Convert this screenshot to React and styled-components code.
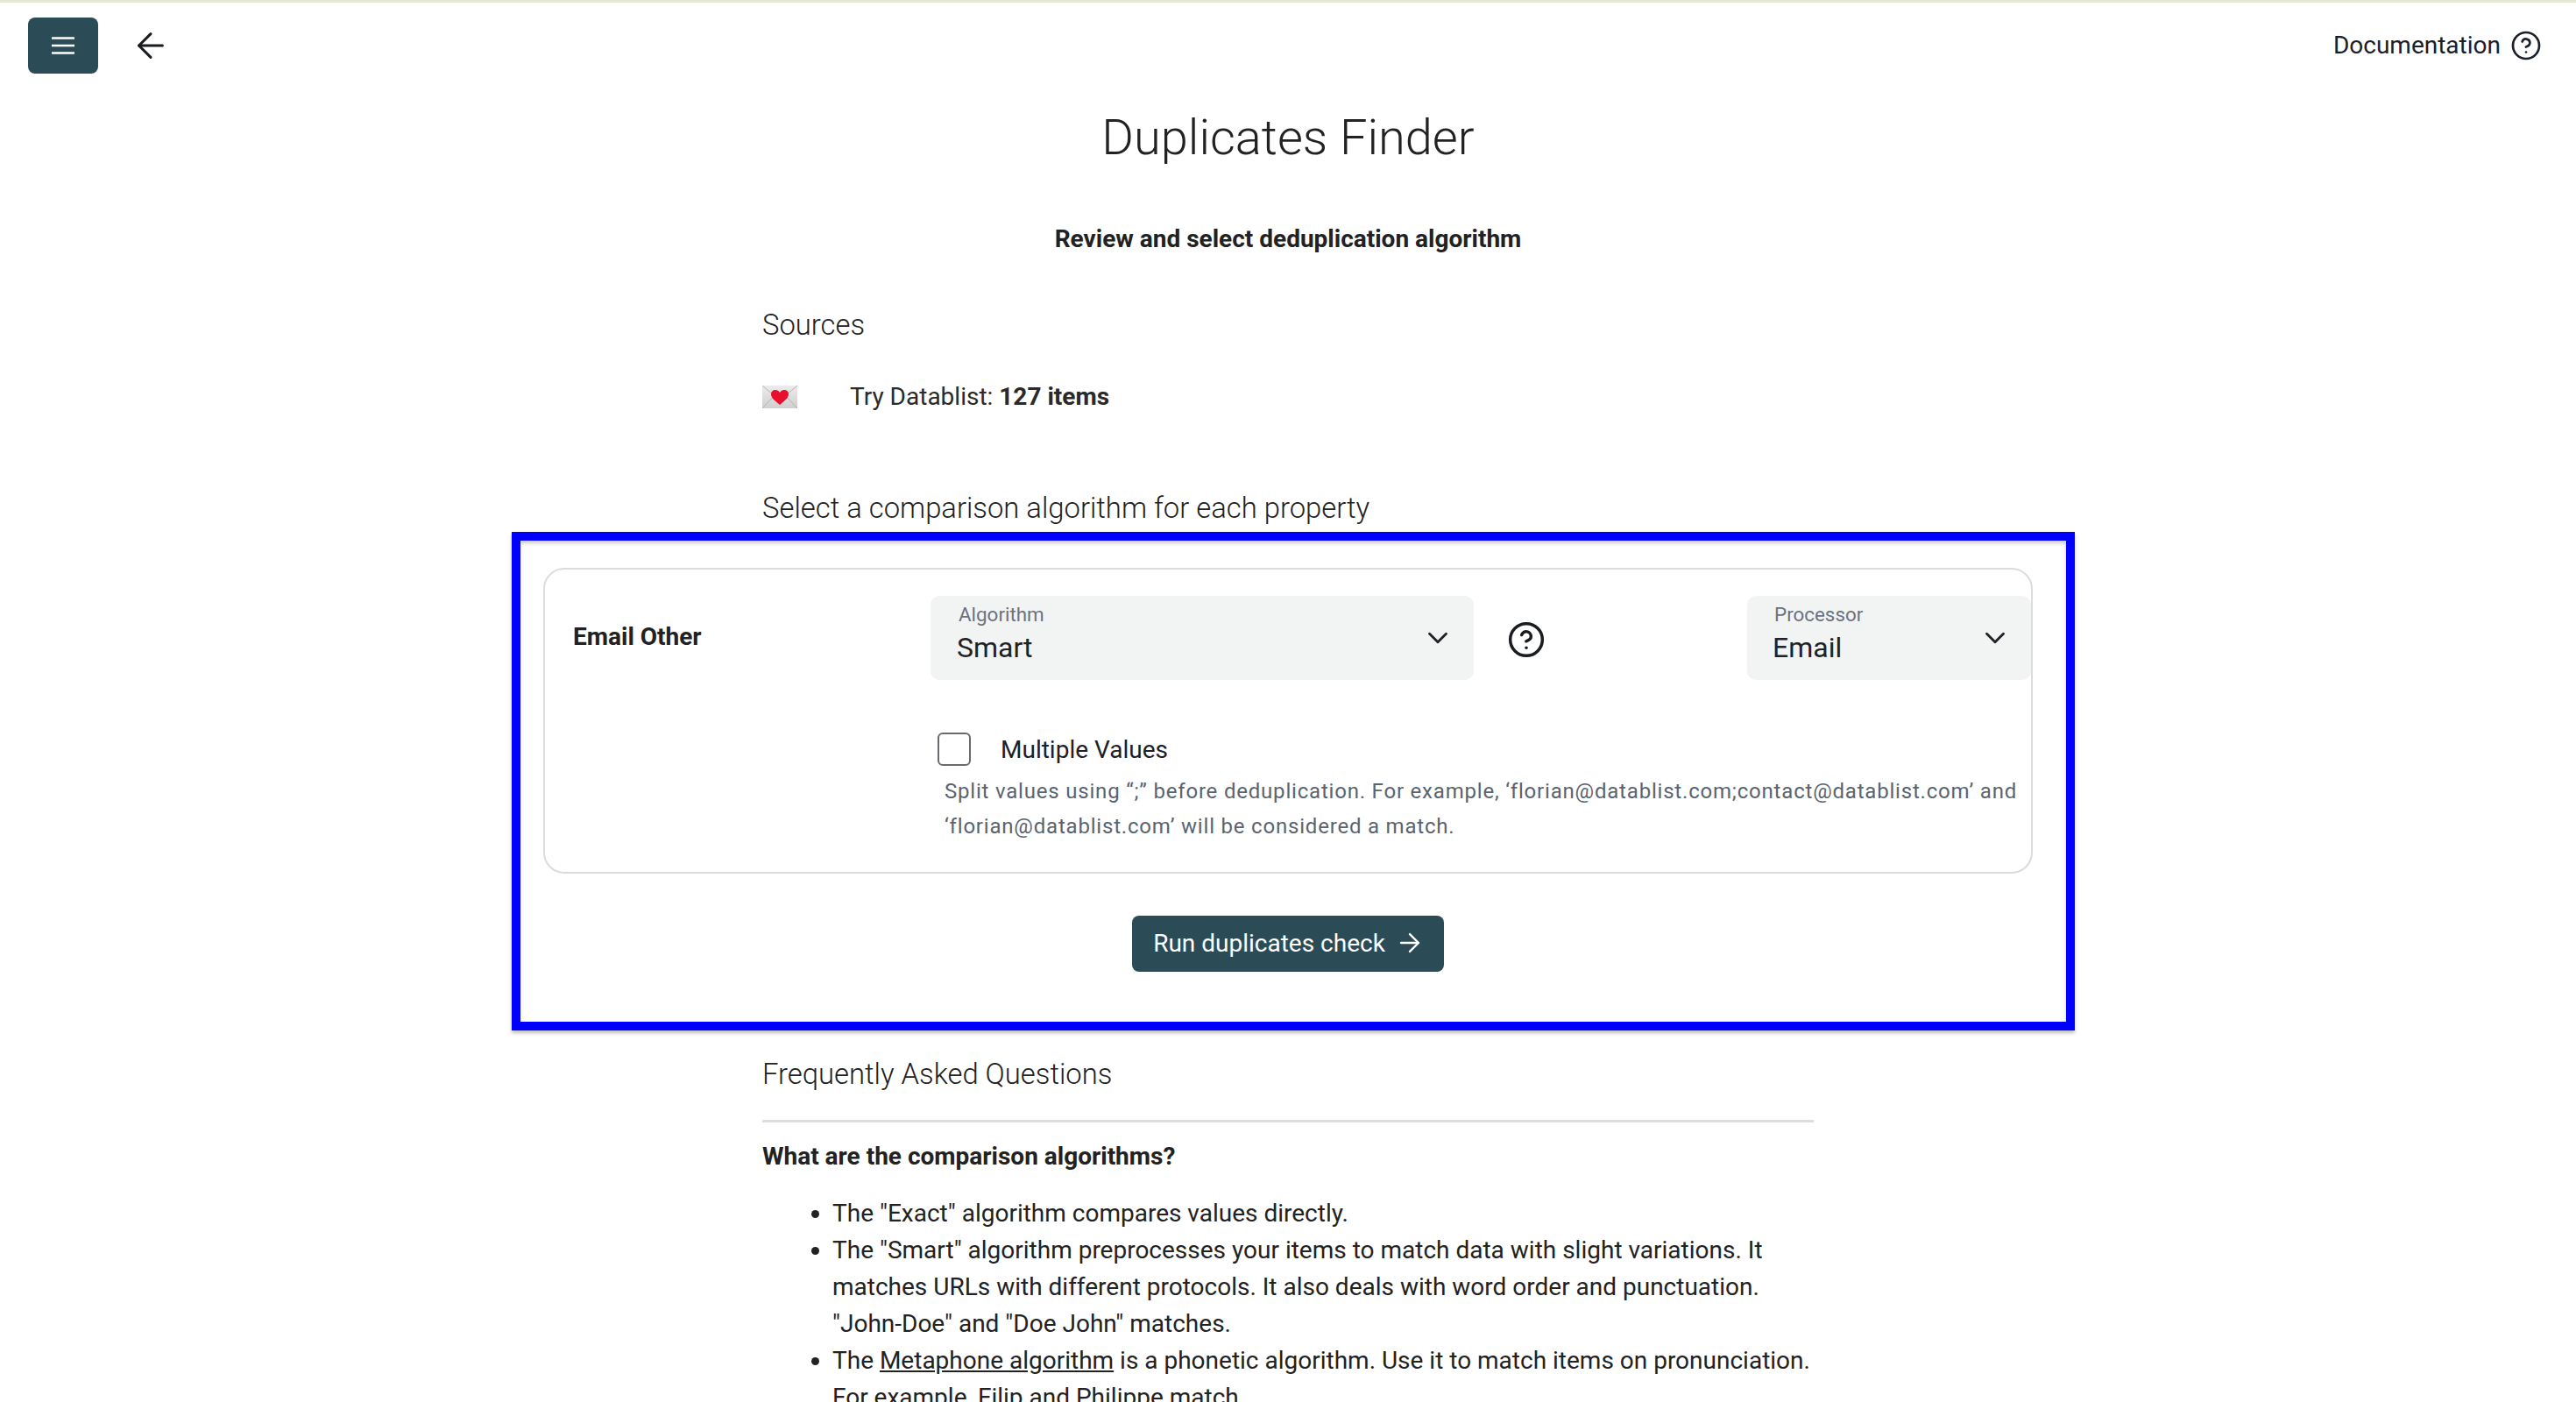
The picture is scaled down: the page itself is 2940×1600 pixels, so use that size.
import React from 'react';
import styled, { createGlobalStyle } from 'styled-components';
import { ArrowLeft, ArrowRight, ChevronDown, CircleHelp } from 'lucide-react';

const GlobalStyle = createGlobalStyle`
  html, body {
    margin: 0;
    height: 1600px;
    overflow: hidden;
    background: #fff;
    color: #1f2226;
    font-family: Roboto, "Liberation Sans", sans-serif;
  }
`;

// Top bar
const Page = styled.div`
  border-top: 3px solid #e5e8d5;
`;

const TopBar = styled.header`
  display: flex;
  align-items: center;
  padding: 17px 39px 0 32px;
  height: 64px;
`;

const MenuButton = styled.button`
  display: flex;
  align-items: center;
  justify-content: center;
  width: 80px;
  height: 64px;
  padding: 0;
  border: 0;
  border-radius: 8px;
  background: #2b4c57;
`;

const BackIcon = styled(ArrowLeft)`
  margin-left: 37px;
  color: #1a1d20;
`;

const DocLink = styled.div`
  display: flex;
  align-items: center;
  gap: 11px;
  margin-left: auto;
  font-size: 28px;
  line-height: 36px;
  color: #1a202c;
`;

// Main column
const Title = styled.h1`
  margin: 37px 0 0;
  font-size: 56px;
  line-height: 72px;
  font-weight: 300;
  text-align: center;
  color: #222;
`;

const Subtitle = styled.p`
  margin: 60px 0 0;
  font-size: 28px;
  line-height: 40px;
  font-weight: 700;
  text-align: center;
  color: #222;
`;

const Column = styled.section`
  width: 1200px;
  margin: ${p => p.$top || 0}px auto 0;
`;

const SectionTitle = styled.h2`
  margin: ${p => p.$top || 0}px 0 0;
  font-size: 32.8px;
  line-height: 44px;
  font-weight: 300;
  color: #222;
`;

const SourceRow = styled.div`
  display: flex;
  align-items: center;
  margin-top: 40px;
  font-size: 28px;
  line-height: 40px;
  color: #2a2a2a;

  & b {
    font-weight: 700;
  }
`;

const SourceEmoji = styled.svg`
  width: 40px;
  height: 26px;
  margin-right: 60px;
`;

// Property card, with the highlight frame over it
const Form = styled.div`
  position: relative;
  width: 1700px;
  margin: 46px auto 0;
`;

const Highlight = styled.div`
  position: absolute;
  top: -41px;
  bottom: -67px;
  left: -36px;
  right: -48px;
  border: 10px solid #0000ff;
  box-shadow: 0 3px 4px rgba(0, 0, 0, 0.25), inset 0 3px 4px rgba(0, 0, 0, 0.2);
  pointer-events: none;
`;

const Card = styled.div`
  box-sizing: border-box;
  height: 349px;
  padding: 30px 0 0 32px;
  border: 2px solid #dcdcdc;
  border-radius: 24px;
`;

const PropertyRow = styled.div`
  display: flex;
  align-items: center;
`;

const PropertyName = styled.div`
  width: 408px;
  margin-top: -4px;
  font-size: 28px;
  font-weight: 700;
  color: #222;
`;

const Select = styled.div`
  box-sizing: border-box;
  display: flex;
  align-items: center;
  justify-content: space-between;
  width: ${p => p.$width}px;
  height: 96px;
  padding: 0 22px 0 ${p => p.$pad}px;
  margin-left: ${p => p.$auto ? 'auto' : '0'};
  margin-right: ${p => p.$auto ? '0' : '38px'};
  border-radius: 10px;
  background: #f2f4f4;
`;

const SelectText = styled.div`
  margin-bottom: 10px;
`;

const SelectLabel = styled.div`
  padding-left: 2px;
  font-size: 22.4px;
  line-height: 28px;
  color: #6b7280;
`;

const SelectValue = styled.div`
  font-size: 32px;
  line-height: 40px;
  margin-top: 4px;
  color: #1f2226;
`;

const FieldHelp = styled(CircleHelp)`
  color: #1a1d20;
  margin-top: 4px;
`;

const Options = styled.div`
  margin: 60px 0 0 416px;
`;

const CheckRow = styled.label`
  display: flex;
  align-items: center;
  gap: 34px;
  font-size: 28px;
  color: #1a202c;
`;

const CheckBox = styled.span`
  box-sizing: border-box;
  width: 38px;
  height: 38px;
  border: 2px solid #666b70;
  border-radius: 6px;
`;

const HelpText = styled.p`
  margin: 9px 0 0 8px;
  width: 1240px;
  font-size: 24px;
  line-height: 40px;
  letter-spacing: 0.8px;
  color: #5a6470;
`;

const RunButton = styled.button`
  display: flex;
  align-items: center;
  gap: 11px;
  height: 64px;
  margin: 48px auto 0;
  padding: 0 22px 2px 24px;
  border: 0;
  border-radius: 8px;
  background: #2b4c57;
  color: #fff;
  font-family: inherit;
  font-size: 28px;
  font-weight: 400;
`;

// FAQ
const Rule = styled.hr`
  margin: 30px 0 0;
  border: 0;
  border-top: 3px solid #dedede;
`;

const Question = styled.h3`
  margin: 19px 0 0;
  font-size: 28px;
  line-height: 40px;
  font-weight: 700;
  color: #222;
`;

const Answers = styled.ul`
  margin: 24px 0 0;
  padding-left: 80px;
  font-size: 28px;
  line-height: 42px;
  color: #222;

  & a {
    color: inherit;
    text-decoration: underline;
  }
`;

const App = () => (
  <Page>
    <GlobalStyle />
    <TopBar>
      <MenuButton>
        <svg width="28" height="20" viewBox="0 0 28 20" fill="none" stroke="#fff" strokeWidth="2.6">
          <path d="M1 1.5h26M1 10h26M1 18.5h26" />
        </svg>
      </MenuButton>
      <BackIcon size={46} strokeWidth={1.6} />
      <DocLink>
        Documentation
        <CircleHelp size={36} strokeWidth={1.8} />
      </DocLink>
    </TopBar>

    <Title>Duplicates Finder</Title>
    <Subtitle>Review and select deduplication algorithm</Subtitle>

    <Column $top={56}>
      <SectionTitle>Sources</SectionTitle>
      <SourceRow>
        <SourceEmoji viewBox="0 0 40 26">
          <defs>
            <linearGradient id="envelope" x1="0" y1="0" x2="0" y2="1">
              <stop offset="0" stopColor="#ececec" />
              <stop offset="1" stopColor="#cfcfcf" />
            </linearGradient>
          </defs>
          <rect width="40" height="26" fill="url(#envelope)" />
          <path d="M0 0l20 17L40 0M0 26l14-15M40 26L26 11" fill="none" stroke="#b5b5b5" strokeWidth="1" />
          <path
            d="M20 22C14 17 10 14 10 10c0-3 2-5 5-5 2 0 4 1 5 3 1-2 3-3 5-3 3 0 5 2 5 5 0 4-4 7-10 12z"
            fill="#e8112d"
          />
        </SourceEmoji>
        <span>
          Try Datablist: <b>127 items</b>
        </span>
      </SourceRow>
      <SectionTitle $top={85}>Select a comparison algorithm for each property</SectionTitle>
    </Column>

    <Form>
      <Card>
        <PropertyRow>
          <PropertyName>Email Other</PropertyName>
          <Select $width={620} $pad={30}>
            <SelectText>
              <SelectLabel>Algorithm</SelectLabel>
              <SelectValue>Smart</SelectValue>
            </SelectText>
            <ChevronDown size={38} strokeWidth={1.8} />
          </Select>
          <FieldHelp size={44} strokeWidth={1.9} />
          <Select $width={324} $pad={29} $auto>
            <SelectText>
              <SelectLabel>Processor</SelectLabel>
              <SelectValue>Email</SelectValue>
            </SelectText>
            <ChevronDown size={38} strokeWidth={1.8} />
          </Select>
        </PropertyRow>
        <Options>
          <CheckRow>
            <CheckBox />
            Multiple Values
          </CheckRow>
          <HelpText>
            Split values using “;” before deduplication. For example, ‘florian@datablist.com;contact@datablist.com’ and
            ‘florian@datablist.com’ will be considered a match.
          </HelpText>
        </Options>
      </Card>
      <RunButton>
        Run duplicates check
        <ArrowRight size={34} strokeWidth={1.7} />
      </RunButton>
      <Highlight />
    </Form>

    <Column $top={95}>
      <SectionTitle>Frequently Asked Questions</SectionTitle>
      <Rule />
      <Question>What are the comparison algorithms?</Question>
      <Answers>
        <li>The "Exact" algorithm compares values directly.</li>
        <li>
          The "Smart" algorithm preprocesses your items to match data with slight variations. It matches URLs with
          different protocols. It also deals with word order and punctuation. "John-Doe" and "Doe John" matches.
        </li>
        <li>
          The <a href="#metaphone">Metaphone algorithm</a> is a phonetic algorithm. Use it to match items on
          pronunciation. For example, Filip and Philippe match.
        </li>
      </Answers>
    </Column>
  </Page>
);

export default App;
